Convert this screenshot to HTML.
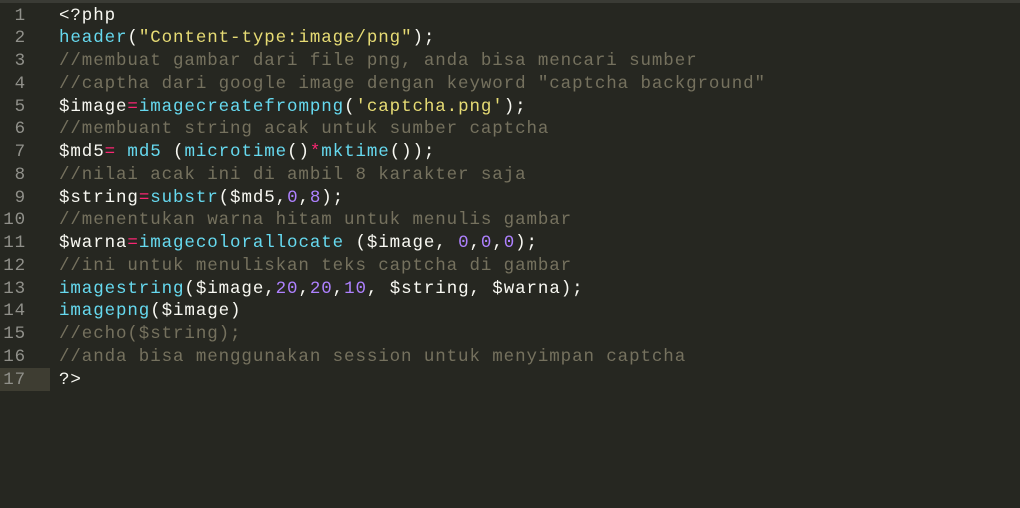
<!DOCTYPE html>
<html><head><meta charset="utf-8"><style>
html,body{margin:0;padding:0;}
body{width:1020px;height:508px;background:#262721;overflow:hidden;position:relative;font-family:"Liberation Mono",monospace;font-size:17.5px;letter-spacing:0.9px;}
.top{position:absolute;left:0;top:0;width:1020px;height:3px;background:#3a3b35;}
.hl{position:absolute;left:0;top:368px;width:50px;height:23px;background:#3e3d32;}
.g{position:absolute;left:0;top:4.5px;width:26px;text-align:right;color:#90908a;line-height:22.75px;white-space:pre;}
.c{position:absolute;left:59px;top:4.5px;color:#f8f8f2;line-height:22.75px;white-space:pre;}
.b{color:#66d9ef}.s{color:#e6db74}.m{color:#75715e}.p{color:#f92672}.n{color:#ae81ff}
</style></head><body>
<div class="top"></div><div class="hl"></div>
<div class="g">1
2
3
4
5
6
7
8
9
10
11
12
13
14
15
16
17</div>
<div class="c">&lt;?php
<span class="b">header</span>(<span class="s">"Content-type:image/png"</span>);
<span class="m">//membuat gambar dari file png, anda bisa mencari sumber</span>
<span class="m">//captha dari google image dengan keyword "captcha background"</span>
$image<span class="p">=</span><span class="b">imagecreatefrompng</span>(<span class="s">'captcha.png'</span>);
<span class="m">//membuant string acak untuk sumber captcha</span>
$md5<span class="p">=</span> <span class="b">md5</span> (<span class="b">microtime</span>()<span class="p">*</span><span class="b">mktime</span>());
<span class="m">//nilai acak ini di ambil 8 karakter saja</span>
$string<span class="p">=</span><span class="b">substr</span>($md5,<span class="n">0</span>,<span class="n">8</span>);
<span class="m">//menentukan warna hitam untuk menulis gambar</span>
$warna<span class="p">=</span><span class="b">imagecolorallocate</span> ($image, <span class="n">0</span>,<span class="n">0</span>,<span class="n">0</span>);
<span class="m">//ini untuk menuliskan teks captcha di gambar</span>
<span class="b">imagestring</span>($image,<span class="n">20</span>,<span class="n">20</span>,<span class="n">10</span>, $string, $warna);
<span class="b">imagepng</span>($image)
<span class="m">//echo($string);</span>
<span class="m">//anda bisa menggunakan session untuk menyimpan captcha</span>
?&gt;</div>
</body></html>
